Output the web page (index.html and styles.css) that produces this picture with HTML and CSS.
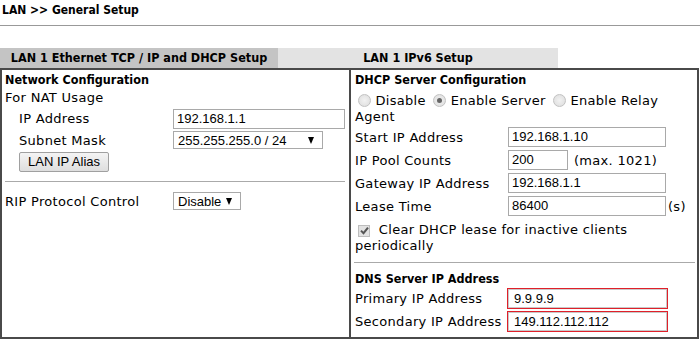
FILE: index.html
```html
<!DOCTYPE html>
<html>
<head>
<meta charset="utf-8">
<link rel="stylesheet" href="styles.css">
</head>
<body>
<div class="title">LAN &gt;&gt; General Setup</div>
<div class="tabs">
  <div class="tab active">LAN 1 Ethernet TCP / IP and DHCP Setup</div>
  <div class="tab">LAN 1 IPv6 Setup</div>
</div>
<div class="panel">
  <div class="col left">
    <div class="head">Network Configuration</div>
    <div class="line">For NAT Usage</div>
    <div class="row r-ip"><span class="lbl ind">IP Address</span><div class="input w172">192.168.1.1</div></div>
    <div class="row r-sel"><span class="lbl ind">Subnet Mask</span><div class="select w150"><span>255.255.255.0 / 24</span><span class="caret"></span></div></div>
    <div class="row r-btn"><div class="btn">LAN IP Alias</div></div>
    <div class="hr hr-left"></div>
    <div class="row r-sel"><span class="lbl">RIP Protocol Control</span><div class="select w68"><span>Disable</span><span class="caret"></span></div></div>
  </div>
  <div class="col right">
    <div class="head">DHCP Server Configuration</div>
    <div class="para radios"><span class="radio first"></span> Disable <span class="radio on"></span> Enable Server <span class="radio"></span> Enable Relay Agent</div>
    <div class="fields">
      <div class="frow"><span class="lbl2">Start IP Address</span><div class="input w158">192.168.1.10</div></div>
      <div class="frow"><span class="lbl2">IP Pool Counts</span><div class="input w60">200</div><span class="note">(max. 1021)</span></div>
      <div class="frow"><span class="lbl2">Gateway IP Address</span><div class="input w158">192.168.1.1</div></div>
      <div class="frow"><span class="lbl2">Lease Time</span><div class="input w158">86400</div><span class="unit">(s)</span></div>
    </div>
    <div class="para check"><span class="cbox"><svg width="9" height="9" viewBox="0 0 9 9"><path d="M1 4.6 L3.5 7.2 L8 1.6" fill="none" stroke="#555" stroke-width="2"/></svg></span> &nbsp;Clear DHCP lease for inactive clients periodically</div>
    <div class="hr hr-right"></div>
    <div class="head head-dns">DNS Server IP Address</div>
    <div class="dns">
      <div class="drow"><span class="lbl3">Primary IP Address</span><div class="input red">9.9.9.9</div></div>
      <div class="drow"><span class="lbl3">Secondary IP Address</span><div class="input red">149.112.112.112</div></div>
    </div>
  </div>
</div>
</body>
</html>
```
FILE: styles.css
```css
* { box-sizing: border-box; }
body {
  margin: 0;
  background: #fff;
  color: #000;
  font-family: "DejaVu Sans", Verdana, sans-serif;
  font-size: 13px;
  letter-spacing: 0.3px;
}
.title {
  width: 700px;
  height: 26px;
  padding: 3px 0 0 2px;
  border-bottom: 1px solid #999;
  font-family: "DejaVu Sans Condensed", "DejaVu Sans", sans-serif;
  font-weight: bold;
  font-size: 12px;
  line-height: 15px;
  letter-spacing: 0;
}
.tabs {
  display: flex;
  margin-top: 22px;
  width: 558px;
  height: 20px;
}
.tab {
  flex: 0 0 280px;
  background: #e3e3e3;
  text-align: center;
  font-family: "DejaVu Sans Condensed", "DejaVu Sans", sans-serif;
  font-weight: bold;
  font-size: 12.5px;
  line-height: 20px;
  letter-spacing: 0;
}
.tab.active {
  flex: 0 0 278px;
  background: #c4c4c4;
}
.panel {
  display: grid;
  grid-template-columns: 347px 346px;
  column-gap: 2px;
  width: 699px;
  height: 271px;
  border: 2px solid #4a4a4a;
  background: #4a4a4a;
}
.col {
  background: #fff;
  padding-top: 1px;
}
.left { padding-left: 3px; padding-right: 4px; }
.right { padding-left: 4px; padding-right: 2px; }
.head {
  height: 18px;
  line-height: 18px;
  font-family: "DejaVu Sans Condensed", "DejaVu Sans", sans-serif;
  font-weight: bold;
  font-size: 12.5px;
  letter-spacing: 0;
}
.line { height: 18px; line-height: 18px; }
.row { display: flex; align-items: center; }
.r-ip { height: 23px; }
.r-sel { height: 20px; }
.r-btn { height: 22px; align-items: flex-end; padding-left: 14px; }
.lbl { flex: 0 0 168px; }
.lbl.ind { padding-left: 14px; }
.input {
  height: 20px;
  border: 1px solid #a9a9a9;
  padding-left: 3px;
  font-family: "Liberation Sans", Arial, sans-serif;
  font-size: 13px;
  line-height: 18px;
  letter-spacing: 0;
  background: #fff;
}
.w172 { width: 172px; }
.w158 { width: 158px; }
.w60 { width: 60px; }
.select {
  display: flex;
  align-items: center;
  justify-content: space-between;
  height: 18px;
  border: 1px solid #a9a9a9;
  padding: 0 8px 0 4px;
  font-family: "Liberation Sans", Arial, sans-serif;
  font-size: 13px;
  letter-spacing: 0;
  background: #fff;
}
.w150 { width: 150px; }
.w68 { width: 68px; }
.caret {
  width: 0;
  height: 0;
  border-left: 3.5px solid transparent;
  border-right: 3.5px solid transparent;
  border-top: 7px solid #000;
}
.btn {
  width: 90px;
  height: 20px;
  border: 1px solid #a0a0a0;
  border-radius: 2px;
  background: linear-gradient(#f4f4f4, #dedede);
  font-family: "Liberation Sans", Arial, sans-serif;
  font-size: 13px;
  line-height: 18px;
  letter-spacing: 0;
  text-align: center;
}
.hr { height: 1px; background: #aaa; }
.hr-left { margin: 9px 0 9px 0; }
.hr-right { margin: 8px 0 7px -1px; }
.para { line-height: 16px; }
.radios { margin-top: 4px; }
.radio {
  display: inline-block;
  width: 13px;
  height: 13px;
  border-radius: 50%;
  border: 1px solid #c2c2c2;
  background: radial-gradient(circle, #f2f2f2 0, #dcdcdc 100%);
  vertical-align: -2px;
  margin-left: 3px;
  position: relative;
}
.radio.on::after {
  content: "";
  position: absolute;
  left: 3px;
  top: 3px;
  width: 5px;
  height: 5px;
  border-radius: 50%;
  background: #666;
}
.fields {
  display: grid;
  row-gap: 3px;
  margin-top: 2px;
}
.frow { display: flex; align-items: center; height: 20px; }
.lbl2 { flex: 0 0 153px; }
.note { margin-left: 6px; }
.unit { margin-left: 2px; }
.check { margin-top: 6px; }
.cbox {
  display: inline-flex;
  align-items: center;
  justify-content: center;
  width: 12px;
  height: 12px;
  border: 1px solid #bdbdbd;
  background: #e2e2e2;
  margin-left: 3px;
  vertical-align: -1px;
}
.dns { display: grid; row-gap: 2px; }
.drow { display: flex; align-items: center; height: 21px; }
.lbl3 { flex: 0 0 152px; }
.input.red {
  width: 161px;
  height: 21px;
  border: 1px solid #e0202a;
  box-shadow: inset 0 0 0 1px #c8c8c8;
  padding-left: 6px;
  line-height: 19px;
}
```
